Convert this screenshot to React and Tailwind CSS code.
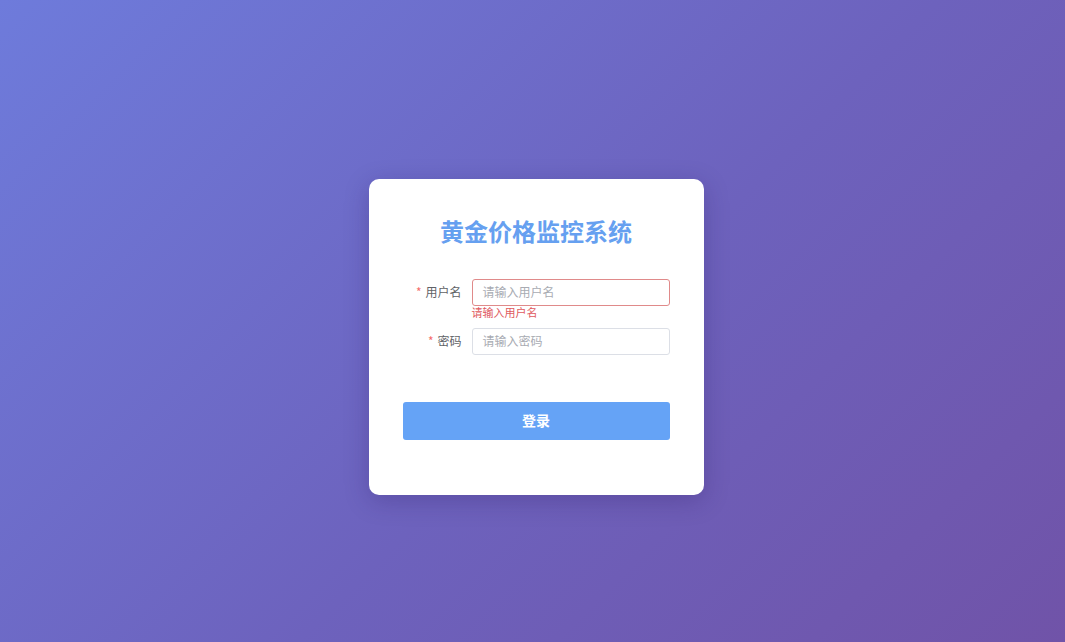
export default function App() {
  const font = { fontFamily: '"Noto Sans CJK SC", "Noto Sans", sans-serif' };
  return (
    <div
      className="w-full h-[642px] flex items-center justify-center pt-[31px] pl-[7px] bg-[linear-gradient(135deg,#6e7bdb_0%,#6d62bd_55%,#7053a8_100%)]"
      style={font}
    >
      <div className="w-[335px] h-[316px] bg-white rounded-[10px] shadow-[0_6px_24px_rgba(40,20,90,0.25)] px-[34px] pt-[34px] flex flex-col">
        <h1 className="text-center text-[24px] leading-[36px] font-bold text-[#66a0f0] tracking-[0px]">
          黄金价格监控系统
        </h1>
        <div className="mt-[30px] flex flex-col">
          <div className="flex items-start">
            <label className="w-[69px] pr-[10px] h-[27px] flex items-center justify-end text-[12px] text-[#606266]">
              <span className="text-[#f56c6c] mr-[4px]">*</span>用户名
            </label>
            <div className="flex-1 flex flex-col">
              <div className="h-[27px] border border-[#e08a8a] rounded-[3px] px-[10px] flex items-center text-[12px] text-[#a8abb2]">
                请输入用户名
              </div>
              <div className="text-[11px] leading-[13px] text-[#e0595e]">请输入用户名</div>
            </div>
          </div>
          <div className="flex items-start mt-[9px]">
            <label className="w-[69px] pr-[10px] h-[27px] flex items-center justify-end text-[12px] text-[#606266]">
              <span className="text-[#f56c6c] mr-[4px]">*</span>密码
            </label>
            <div className="flex-1 h-[27px] border border-[#dcdfe6] rounded-[3px] px-[10px] flex items-center text-[12px] text-[#a8abb2]">
              请输入密码
            </div>
          </div>
        </div>
        <button className="mt-[47px] h-[38px] w-full rounded-[3px] bg-[#65a3f6] text-white text-[14px] font-bold">
          登录
        </button>
      </div>
    </div>
  );
}
